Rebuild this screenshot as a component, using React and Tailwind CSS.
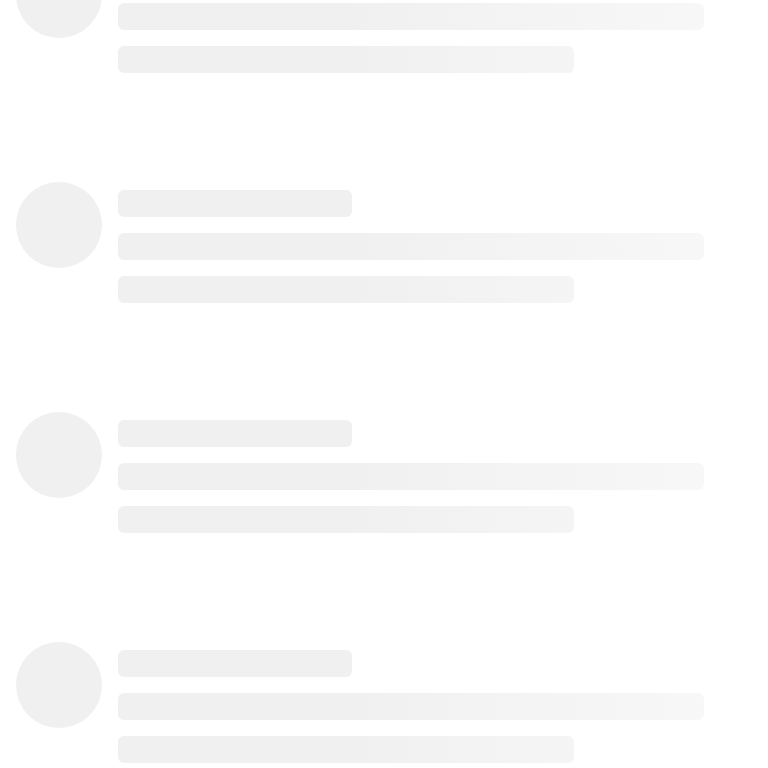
import React from 'react';

const Bar = ({ width }) => (
    <div
        className={`h-[27px] rounded-md bg-linear-to-r from-[#f0f0f0] from-45% to-[#f8f8f8] to-95% bg-fixed ${width}`}
    ></div>
);

const SkeletonRow = () => (
    <div className="flex items-start gap-[16px]">
        <div className="w-[86px] h-[86px] shrink-0 rounded-full bg-[#f0f0f0]"></div>
        <div className="flex flex-col gap-[16px] pt-[8px]">
            <Bar width="w-[234px]" />
            <Bar width="w-[586px]" />
            <Bar width="w-[456px]" />
        </div>
    </div>
);

const App = () => {
    const rows = [0, 1, 2, 3];
    return (
        <div className="w-[768px] h-[768px] overflow-hidden bg-white">
            <div className="flex flex-col gap-[109px] pl-[16px] -mt-[48px]">
                {rows.map((r) => (
                    <SkeletonRow key={r} />
                ))}
            </div>
        </div>
    );
};

export default App;
